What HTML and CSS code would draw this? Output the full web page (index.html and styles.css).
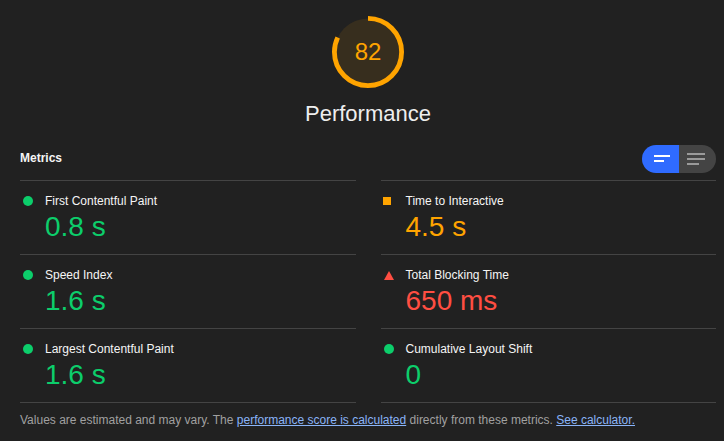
FILE: index.html
```html
<!DOCTYPE html>
<html lang="en">
<head>
<meta charset="utf-8">
<title>Performance</title>
<link rel="stylesheet" href="styles.css">
</head>
<body>
<div class="report">
  <div class="gauge-wrap">
    <div class="gauge">
      <svg class="gauge-svg" viewBox="0 0 120 120" width="72" height="72">
        <circle class="gauge-base" cx="60" cy="60" r="56"></circle>
        <circle class="gauge-arc" cx="60" cy="60" r="56" stroke-dasharray="288.5 351.9" transform="rotate(-90 60 60)"></circle>
      </svg>
      <span class="gauge-score">82</span>
    </div>
    <div class="gauge-label">Performance</div>
  </div>

  <div class="metrics-header">
    <span class="metrics-title">Metrics</span>
    <div class="toggle">
      <span class="toggle-btn toggle-on">
        <svg width="37" height="28" viewBox="0 0 37 28"><rect x="12" y="10" width="16" height="2" fill="#fff"/><rect x="12" y="15" width="10" height="2" fill="#fff"/></svg>
      </span>
      <span class="toggle-btn toggle-off">
        <svg width="37" height="28" viewBox="0 0 37 28"><rect x="8" y="8" width="18" height="2" fill="#9a9a9a"/><rect x="8" y="13" width="18" height="2" fill="#9a9a9a"/><rect x="8" y="18" width="12" height="2" fill="#9a9a9a"/></svg>
      </span>
    </div>
  </div>

  <div class="metrics-grid">
    <div class="metric">
      <span class="icon icon-pass"></span>
      <span class="metric-title">First Contentful Paint</span>
      <span class="metric-value pass">0.8 s</span>
    </div>
    <div class="metric">
      <span class="icon icon-average"></span>
      <span class="metric-title">Time to Interactive</span>
      <span class="metric-value average">4.5 s</span>
    </div>
    <div class="metric">
      <span class="icon icon-pass"></span>
      <span class="metric-title">Speed Index</span>
      <span class="metric-value pass">1.6 s</span>
    </div>
    <div class="metric">
      <svg class="icon icon-fail" width="10" height="9" viewBox="0 0 10 9"><polygon points="5,0 10,9 0,9" fill="#ff4e42"/></svg>
      <span class="metric-title">Total Blocking Time</span>
      <span class="metric-value fail">650 ms</span>
    </div>
    <div class="metric metric-last">
      <span class="icon icon-pass"></span>
      <span class="metric-title">Largest Contentful Paint</span>
      <span class="metric-value pass">1.6 s</span>
    </div>
    <div class="metric metric-last">
      <span class="icon icon-pass"></span>
      <span class="metric-title">Cumulative Layout Shift</span>
      <span class="metric-value pass">0</span>
    </div>
  </div>

  <p class="disclaimer">Values are estimated and may vary. The <a href="#">performance score is calculated</a> directly from these metrics. <a href="#">See calculator.</a></p>
</div>
</body>
</html>
```

FILE: styles.css
```css
html, body {
  margin: 0;
  padding: 0;
  background: #212121;
}

body {
  font-family: "Liberation Sans", Arial, sans-serif;
  color: #f0f0f0;
}

.report {
  padding: 0 8px 0 20px;
}

.gauge-wrap {
  padding-top: 16px;
  display: flex;
  flex-direction: column;
  align-items: center;
}

.gauge {
  display: grid;
  width: 72px;
  height: 72px;
}

.gauge-svg,
.gauge-score {
  grid-area: 1 / 1;
}

.gauge-svg {
  display: block;
}

.gauge-base {
  fill: rgb(55, 46, 30);
  stroke: none;
}

.gauge-arc {
  fill: none;
  stroke: #ffa400;
  stroke-width: 8;
}

.gauge-score {
  place-self: center;
  color: #ffa400;
  font-size: 24px;
  line-height: 28px;
}

.gauge-label {
  margin-top: 12px;
  font-size: 22px;
  line-height: 28px;
  color: #eeeeee;
}

.metrics-header {
  margin-top: 17px;
  margin-bottom: 7px;
  height: 28px;
  display: flex;
  align-items: center;
  justify-content: space-between;
}

.metrics-title {
  font-size: 12px;
  font-weight: bold;
  line-height: 16px;
  margin-bottom: 3px;
  color: #f5f5f5;
}

.toggle {
  display: flex;
  height: 28px;
  border-radius: 14px;
  overflow: hidden;
}

.toggle-btn {
  display: block;
  width: 37px;
  height: 28px;
}

.toggle-btn svg {
  display: block;
}

.toggle-on {
  background: #2f6bff;
}

.toggle-off {
  background: #444444;
}

.metrics-grid {
  display: grid;
  grid-template-columns: 1fr 1fr;
  column-gap: 25px;
}

.metric {
  border-top: 1px solid #444444;
  padding: 12px 0 11px;
  display: grid;
  grid-template-columns: 25px 1fr;
  grid-template-rows: 16px auto;
  row-gap: 2px;
}

.metric-last {
  border-bottom: 1px solid #444444;
}

.icon {
  grid-column: 1;
  grid-row: 1;
  align-self: center;
  display: block;
  margin-left: 3px;
}

.icon-pass {
  width: 10px;
  height: 10px;
  border-radius: 50%;
  background: #0cce6b;
}

.icon-average {
  width: 8px;
  height: 8px;
  margin-left: 2px;
  background: #ffa400;
}

.metric-title {
  grid-column: 2;
  grid-row: 1;
  font-size: 12px;
  line-height: 16px;
  color: #f5f5f5;
}

.metric-value {
  grid-column: 2;
  grid-row: 2;
  font-size: 28px;
  line-height: 32px;
}

.pass { color: #0cce6b; }
.average { color: #ffa400; }
.fail { color: #ff4e42; }

.disclaimer {
  margin: 9px 0 0;
  font-size: 12px;
  line-height: 16px;
  color: #a0a0a0;
}

.disclaimer a {
  color: #8ab4f8;
  text-decoration: underline;
}
```
